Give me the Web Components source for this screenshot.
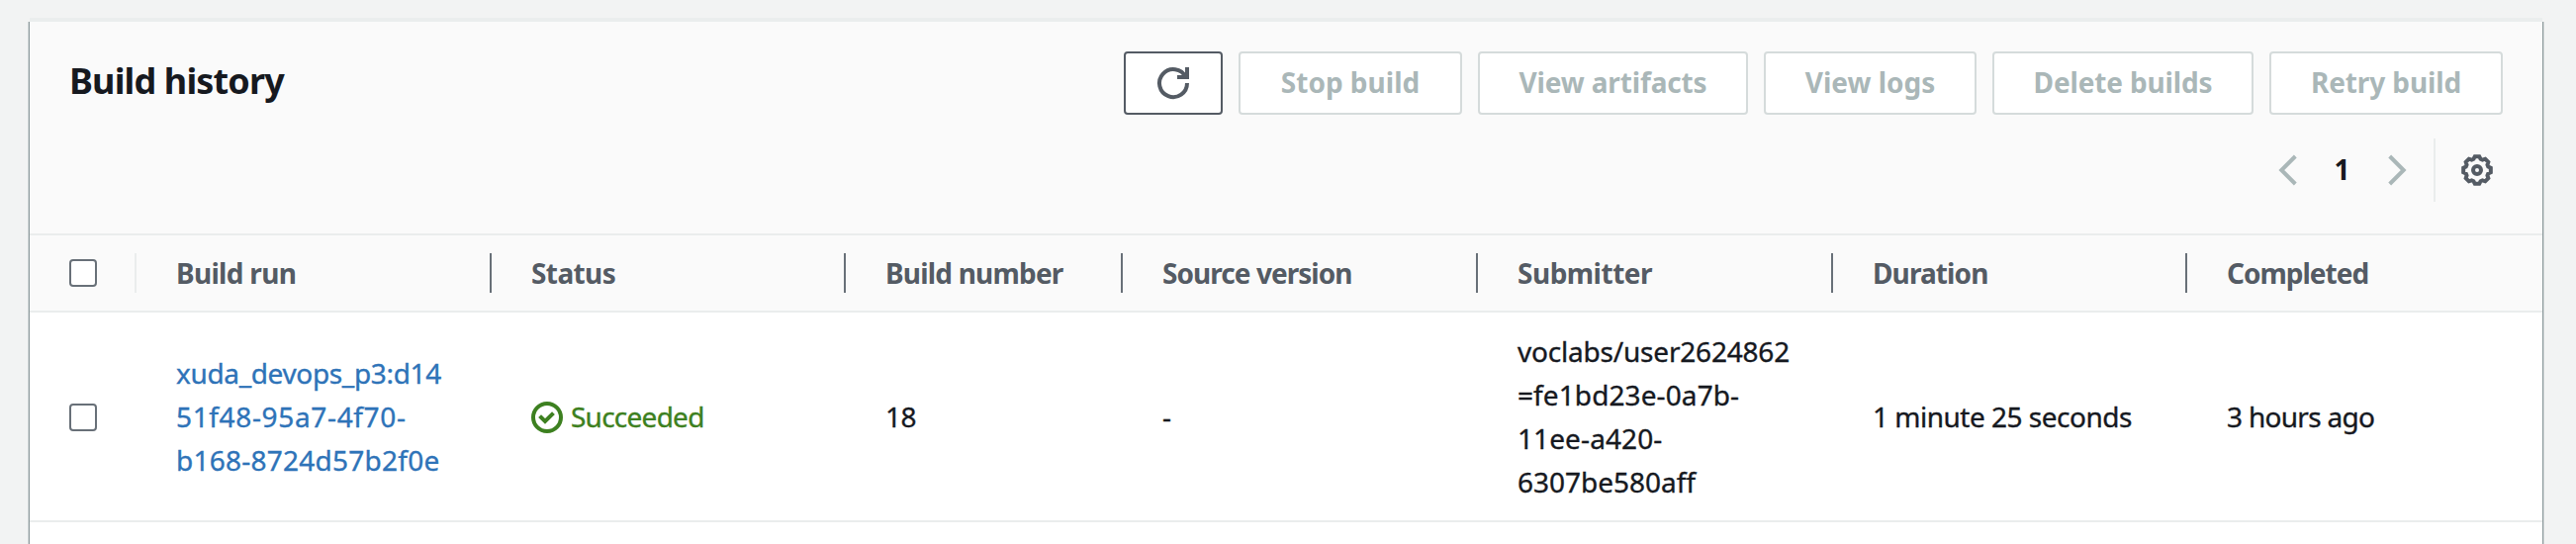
<!DOCTYPE html>
<html lang="en"><head><meta charset="utf-8"><title>Build history</title>
<style>
html,body{margin:0;height:550px;overflow:hidden;background:#f2f3f3}
body{font:400 28px/44px "Noto Sans","Open Sans",sans-serif;color:#16191f}
</style></head><body>
<history-panel>
  <panel-header slot="header">
    <span slot="title">Build history</span>
    <action-button slot="actions" style="width:100px" active><ui-icon name="refresh"></ui-icon></action-button>
    <action-button slot="actions" style="width:226px">Stop build</action-button>
    <action-button slot="actions" style="width:273px;letter-spacing:-.15px">View artifacts</action-button>
    <action-button slot="actions" style="width:215px">View logs</action-button>
    <action-button slot="actions" style="width:264px;letter-spacing:-.15px">Delete builds</action-button>
    <action-button slot="actions" style="width:236px;letter-spacing:-.1px">Retry build</action-button>
    <page-nav slot="nav">1</page-nav>
  </panel-header>
  <table-row head>
    <table-cell><check-box></check-box></table-cell>
    <table-cell divider="light" style="letter-spacing:-.7px">Build run</table-cell>
    <table-cell divider style="letter-spacing:-.6px">Status</table-cell>
    <table-cell divider style="letter-spacing:-.8px">Build number</table-cell>
    <table-cell divider style="letter-spacing:-.95px">Source version</table-cell>
    <table-cell divider>Submitter</table-cell>
    <table-cell divider style="letter-spacing:-.9px">Duration</table-cell>
    <table-cell divider style="letter-spacing:-1px">Completed</table-cell>
  </table-row>
  <table-row>
    <table-cell><check-box style="margin-top:2px"></check-box></table-cell>
    <table-cell style="color:#2e73b8;letter-spacing:-.35px">xuda_devops_p3:d14<br><span style="letter-spacing:.65px">51f48-95a7-4f70-</span><br><span style="letter-spacing:.25px">b168-8724d57b2f0e</span></table-cell>
    <table-cell><status-label>Succeeded</status-label></table-cell>
    <table-cell>18</table-cell>
    <table-cell>-</table-cell>
    <table-cell style="letter-spacing:-.2px">voclabs/user2624862<br><span style="letter-spacing:.1px">=fe1bd23e-0a7b-<br>11ee-a420-</span><br><span style="letter-spacing:0">6307be580aff</span></table-cell>
    <table-cell>1 minute 25 seconds</table-cell>
    <table-cell style="letter-spacing:-.7px">3 hours ago</table-cell>
  </table-row>
</history-panel>
<script>
const define=(name,html,setup)=>customElements.define(name,class extends HTMLElement{
  constructor(){super();this.attachShadow({mode:'open'}).innerHTML=html}
  connectedCallback(){if(setup)setup(this)}
});

// Gear outline: eight flat teeth round the centre of a 16-unit box.
const gear=(()=>{const p=[];for(let k=0;k<8;k++)for(const [a,r] of [[-9,7],[9,7],[17.5,5.9],[27.5,5.9]]){
  const t=(k*45+a)*Math.PI/180;p.push((8+r*Math.sin(t)).toFixed(2)+' '+(8-r*Math.cos(t)).toFixed(2))}
  return 'M'+p.join('L')+'Z'})();
const icons={
  refresh:'<path d="M10 5h5V0"/><path d="M15 8a7 7 0 1 1-.7-3"/>',
  gear:`<path d="${gear}"/><circle cx="8" cy="8" r="2"/>`,
  success:'<circle cx="8" cy="8" r="7"/><path stroke-linecap="square" d="m5 8 2 2 3.52-3.52"/>',
  prev:'<path d="M11.65 1l-7 7 7 7"/>',
  next:'<path d="M4.35 1l7 7-7 7"/>'
};
define('ui-icon','<style>:host{display:block;width:32px;height:32px;flex:none}svg{display:block;overflow:visible}</style><div></div>',
  el=>{el.shadowRoot.querySelector('div').innerHTML=`<svg width="32" height="32" viewBox="0 0 16 16" fill="none" stroke="currentColor" stroke-width="2">${icons[el.getAttribute('name')]}</svg>`});

define('action-button',`<style>
:host{display:block;height:64px}
button{all:unset;box-sizing:border-box;width:100%;height:100%;display:flex;align-items:center;justify-content:center;border:2px solid #d5dbdb;border-radius:4px;background:#fff;color:#aab7b8;font-weight:700;padding-bottom:2px;white-space:nowrap}
:host([active]) button{border-color:#545b64;color:#545b64;padding:0}
</style><button><slot></slot></button>`);

define('page-nav',`<style>
:host{display:flex;align-items:center;height:64px;color:#aab7b8}
b{box-sizing:border-box;width:78px;text-align:center;color:#16191f;padding:0 1px 2px 0;font-weight:700}
i{width:2px;height:64px;background:#eaeded;margin:0 26px 0 21px}
.gear{color:#545b64;margin-right:10px}
</style><ui-icon name="prev"></ui-icon><b><slot></slot></b><ui-icon name="next"></ui-icon><i></i><ui-icon class="gear" name="gear"></ui-icon>`);

define('panel-header',`<style>
:host{display:flex;flex-direction:column;box-sizing:border-box;height:216px;padding:30px 40px 0;background:#fafafa;border-bottom:2px solid #eaeded}
.top{display:flex;justify-content:space-between;align-items:flex-start;height:64px}
h2{margin:8px 0 0;font-size:36px;line-height:44px;letter-spacing:-.85px}
.actions{display:flex;gap:16px}
.nav{display:flex;justify-content:flex-end;margin-top:24px}
</style><div class="top"><h2><slot name="title"></slot></h2><div class="actions"><slot name="actions"></slot></div></div><div class="nav"><slot name="nav"></slot></div>`);

define('check-box','<style>:host{display:block;box-sizing:border-box;width:28px;height:28px;border:2px solid #687078;border-radius:4px;background:#fff}</style>');

define('status-label','<style>:host{display:flex;align-items:center;gap:8px;color:#3d8020}ui-icon{margin-top:2px}span{letter-spacing:-.75px}</style><ui-icon name="success"></ui-icon><span><slot></slot></span>');

define('table-cell',`<style>
:host{display:flex;align-items:center;box-sizing:border-box;padding-left:40px;white-space:nowrap;letter-spacing:-.5px}
:host([divider]){border-left:2px solid #687078;margin-left:-2px;height:40px;padding-bottom:1px}
:host([divider=light]){border-color:#eaeded}
</style><div><slot></slot></div>`);

define('table-row',`<style>
:host{display:grid;grid-template-columns:108px 359px 358px 280px 359px 359px 358px 1fr;align-items:center;box-sizing:border-box;height:212px;background:#fff;border-bottom:2px solid #eaeded;-webkit-text-stroke:.35px currentColor}
:host([head]){height:78px;background:#fafafa;color:#545b64;font-weight:700;-webkit-text-stroke:0}
</style><slot></slot>`);

define('history-panel',`<style>
:host{display:block;margin:0 34px 0 30px;padding-top:18px}
section{border-top:4px solid #eaeded}
.body{height:528px;background:#fff;box-shadow:-1px 0 0 #8c999b,1px 0 0 #8c999b,-2px 0 0 #d3d8d9,2px 0 0 #d3d8d9}
</style><section><div class="body"><slot name="header"></slot><slot></slot></div></section>`);
</script>
</body></html>
